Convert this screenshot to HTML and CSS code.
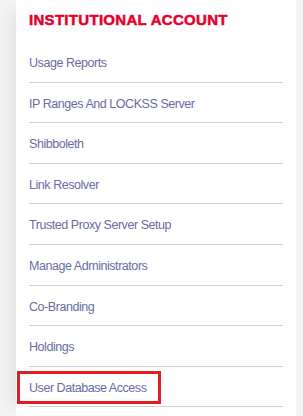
FILE: index.html
```html
<!DOCTYPE html>
<html lang="en">
<head>
  <meta charset="UTF-8">
  <title>Institutional Account</title>
  <link rel="stylesheet" href="styles.css">
</head>
<body>
  <div class="panel">
    <h3>INSTITUTIONAL ACCOUNT</h3>
    <ul class="menu">
      <li><a href="#">Usage Reports</a></li>
      <li><a href="#">IP Ranges And LOCKSS Server</a></li>
      <li><a href="#">Shibboleth</a></li>
      <li><a href="#">Link Resolver</a></li>
      <li><a href="#">Trusted Proxy Server Setup</a></li>
      <li><a href="#">Manage Administrators</a></li>
      <li><a href="#">Co-Branding</a></li>
      <li><a href="#">Holdings</a></li>
      <li class="marked"><a href="#">User Database Access</a></li>
    </ul>
  </div>
</body>
</html>
```

FILE: styles.css
```css
body {
  font-family: 'Liberation Sans', Arial, sans-serif;
  margin: 0; padding: 0;
  background: #f3f3f3;
}
.panel {
  width: 280px;
  margin-left: 16px;
  background: #ffffff;
  padding: 11px 13px 0;
  box-sizing: border-box;
  min-height: 416px;
  box-shadow: -14px 0 14px -10px rgba(0,0,0,0.08);
}
h3 {
  margin: 0;
  color: #e4002b;
  font-size: 15px;
  font-weight: 900;
  letter-spacing: 0.3px;
  line-height: 18px;
  -webkit-text-stroke: 0.5px #e4002b;
}
.menu {
  list-style: none;
  margin: 26px 0 0;
  padding: 0;
}
.menu li {
  height: 40.6px;
  border-bottom: 1px solid #d0cde2;
  box-sizing: border-box;
  position: relative;
}
.menu li:first-child { height: 27.6px; }
.menu a {
  display: block;
  color: #6a6ba4;
  font-size: 12.5px;
  letter-spacing: -0.45px;
  text-decoration: none;
  padding-top: 14px;
  line-height: 15px;
}
.menu li:first-child a { padding-top: 1px; }
.menu .marked::after {
  content: '';
  position: absolute;
  left: -12px;
  top: 4px;
  width: 144px;
  height: 33px;
  border: 3px solid #e31b23;
  box-sizing: border-box;
}
```
